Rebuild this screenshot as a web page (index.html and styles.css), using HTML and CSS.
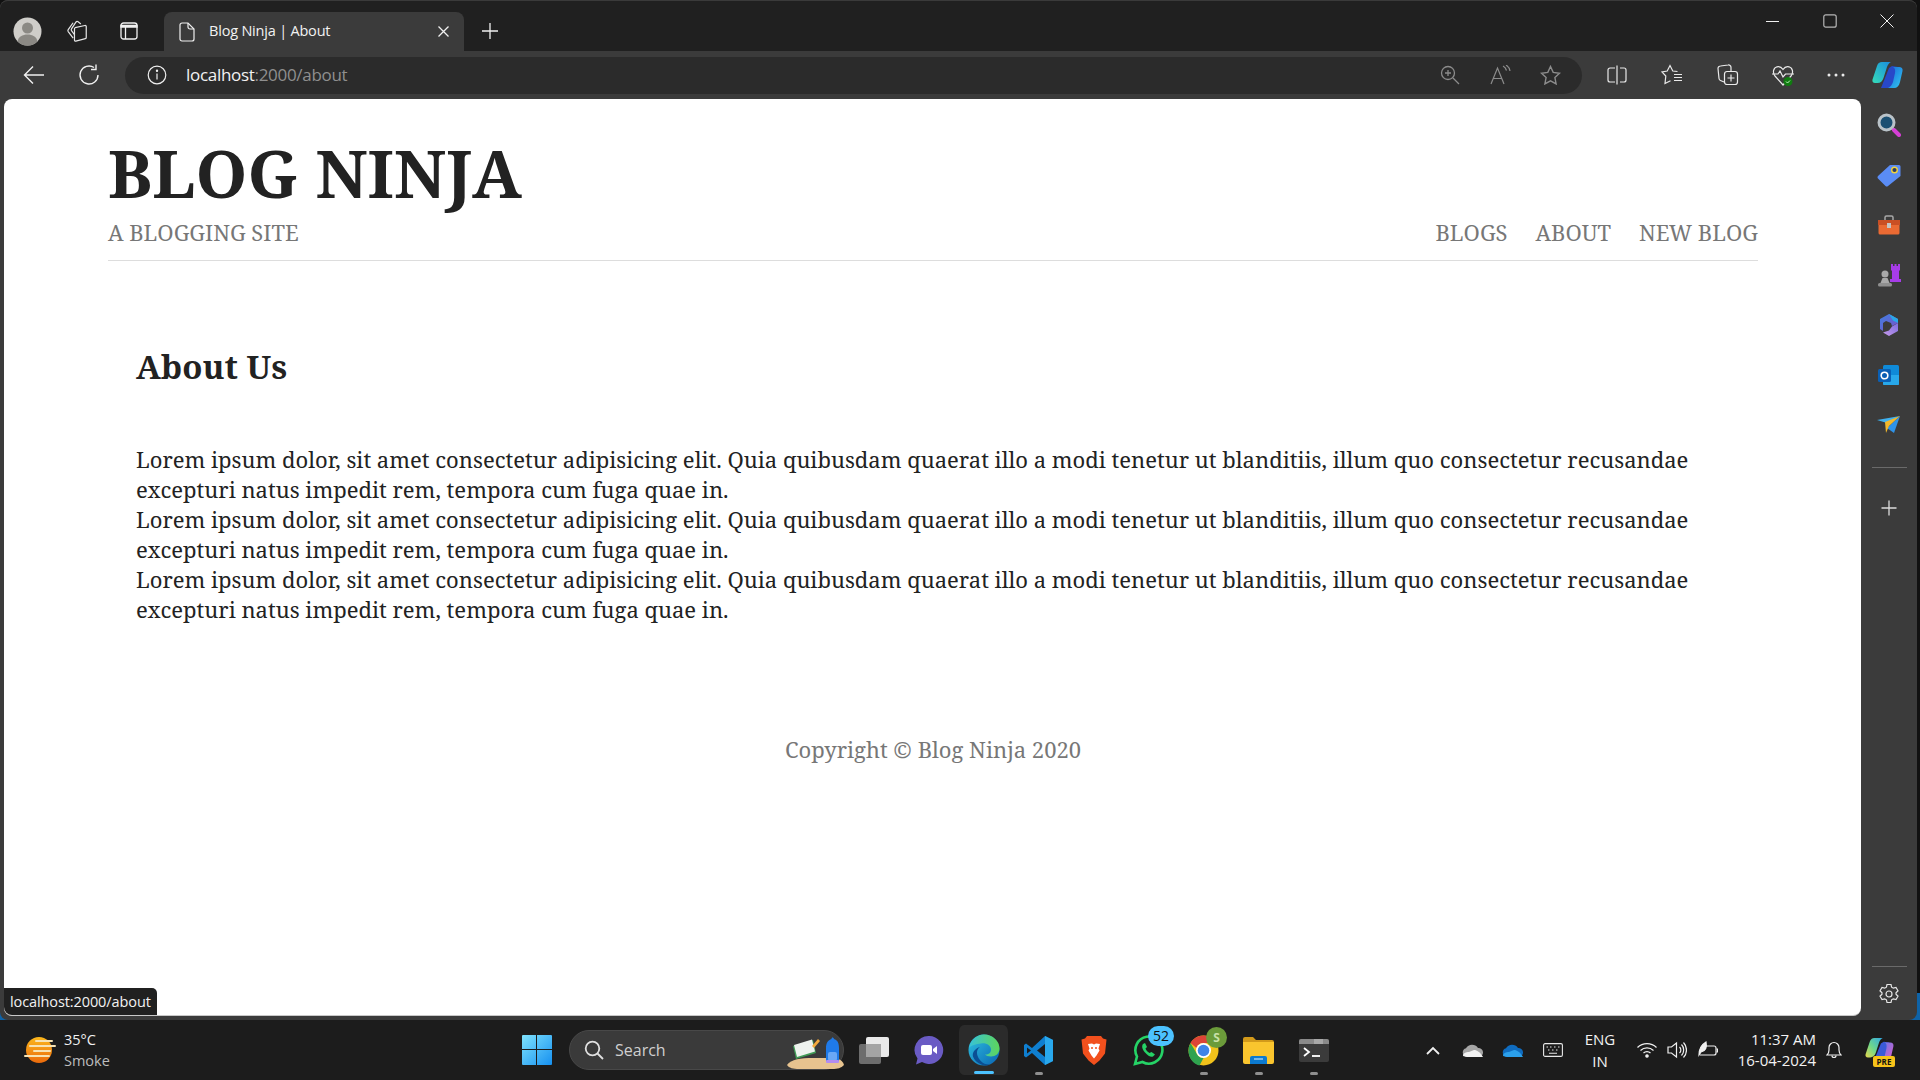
FILE: index.html
```html
<!DOCTYPE html>
<html lang="en">
<head>
  <meta charset="UTF-8">
  <title>Blog Ninja | About</title>
  <link rel="stylesheet" href="styles.css">
</head>
<body>
  <div class="desk-patch desk-patch-left"></div>
  <div class="desk-patch desk-patch-right"></div>
  <div class="window">
    <!-- Tab strip -->
    <div class="tabstrip">
      <div class="avatar">
        <svg width="29" height="29" viewBox="0 0 29 29"><circle cx="14.500" cy="14.500" r="14" fill="#cfcdc9"/><circle cx="14.500" cy="11" r="5.500" fill="#8b8984"/><path d="M4.500 24.500c1-5 5-7 10-7s9 2 10 7a14 14 0 0 1-20 0z" fill="#8b8984"/></svg>
      </div>
      <div class="strip-btn strip-collections">
        <svg width="22" height="22" viewBox="0 0 20 20" fill="none" stroke="#e6e6e6" stroke-width="1.100"><path d="M8.300 7l8.900-2a1 1 0 0 1 1.200 1v10a1 1 0 0 1-.8 1l-8.600 2.200a1 1 0 0 1-1.300-1V8a1 1 0 0 1 .6-1z"/><path d="M6.500 16.500L2 10.500a1.500 1.500 0 0 1 0-1.700L6.500 2.500"/><path d="M7.500 13l-2.500-3.300a1.500 1.500 0 0 1 0-1.600L9 2a1.500 1.500 0 0 1 2-.4l2.500 2"/></svg>
      </div>
      <div class="strip-btn strip-vertical">
        <svg width="18" height="18" viewBox="0 0 18 18" fill="none" stroke="#f0f0f0" stroke-width="1.300"><rect x="1" y="1" width="16" height="16" rx="2.500"/><path d="M5.500 5v12"/><path d="M1 3.500h16v1.500H1z" fill="#f0f0f0"/></svg>
      </div>
      <div class="tab">
        <svg class="tab-doc" width="16" height="20" viewBox="0 0 16 20" fill="none" stroke="#f0f0f0" stroke-width="1.200"><path d="M3 1h6l6 6v10a2 2 0 0 1-2 2H3a2 2 0 0 1-2-2V3a2 2 0 0 1 2-2z"/><path d="M9 1v4a2 2 0 0 0 2 2h4"/></svg>
        <span class="tab-title">Blog Ninja | About</span>
        <svg class="tab-close" width="11" height="11" viewBox="0 0 11 11" stroke="#f0f0f0" stroke-width="1.300"><path d="M.5.500l10 10M10.500.500l-10 10"/></svg>
      </div>
      <div class="strip-btn strip-new">
        <svg width="18" height="18" viewBox="0 0 18 18" stroke="#f0f0f0" stroke-width="1.300"><path d="M9 1v16M1 9h16"/></svg>
      </div>
      <div class="win-controls">
        <svg width="14" height="14" viewBox="0 0 14 14" stroke="#f0f0f0" stroke-width="1"><path d="M0 7.500h13"/></svg>
        <svg width="14" height="14" viewBox="0 0 14 14" fill="none" stroke="#b5b5b5" stroke-width="1.200"><rect x=".8" y=".8" width="12.400" height="12.400" rx="2"/></svg>
        <svg width="14" height="14" viewBox="0 0 14 14" stroke="#f0f0f0" stroke-width="1"><path d="M.5.500l13 13M13.500.500l-13 13"/></svg>
      </div>
    </div>

    <!-- Toolbar -->
    <div class="toolbar">
      <svg class="tool tool-back" width="22" height="20" viewBox="0 0 22 20" fill="none" stroke="#f0f0f0" stroke-width="1.400"><path d="M10 1.500L1.500 10l8.500 8.500M1.500 10H21"/></svg>
      <svg class="tool tool-reload" width="22" height="22" viewBox="0 0 22 22" fill="none" stroke="#f0f0f0" stroke-width="1.400"><path d="M16 3.500A9 9 0 1 0 20 11"/><path d="M18 .5v5h-5"/></svg>
      <div class="address">
        <svg class="addr-info" width="20" height="20" viewBox="0 0 20 20" fill="none" stroke="#eee" stroke-width="1.200"><circle cx="10" cy="10" r="8.800"/><path d="M10 8.500v6"/><circle cx="10" cy="5.800" r=".6" fill="#eee"/></svg>
        <span class="url"><span class="url-host">localhost</span>:2000/about</span>
        <div class="addr-icons">
          <svg width="20" height="20" viewBox="0 0 20 20" fill="none" stroke="#8c8c8c" stroke-width="1.300"><circle cx="8" cy="8" r="6.500"/><path d="M13 13l6 6M8 5v6M5 8h6"/></svg>
          <svg width="22" height="20" viewBox="0 0 22 20" fill="none" stroke="#8c8c8c" stroke-width="1.200"><path d="M1 19L7.500 3 14 19M3.500 13.500h8"/><path d="M13 1c2 1 3 2.500 3.500 4.500M16 0c2 1.200 3.500 3 4 6"/></svg>
          <svg class="addr-star" width="21" height="20" viewBox="0 0 21 20" fill="none" stroke="#8c8c8c" stroke-width="1.400"><path d="M10.500 1.500l2.700 5.900 6.300.8-4.600 4.400 1.200 6.300-5.600-3.100-5.600 3.100 1.200-6.300-4.600-4.400 6.300-.8z"/></svg>
        </div>
      </div>
      <div class="tool-icons">
        <svg class="ti-split" width="20" height="20" viewBox="0 0 20 20" fill="none" stroke="#eaeaea" stroke-width="1.200"><path d="M8 3H3a2 2 0 0 0-2 2v10a2 2 0 0 0 2 2h5M13 3h4a2 2 0 0 1 2 2v10a2 2 0 0 1-2 2h-4M10 .5v19"/></svg>
        <svg class="ti-fav" width="22" height="22" viewBox="0 0 22 22" fill="none" stroke="#eaeaea" stroke-width="1.200"><path d="M16.500 7.500L11.800 7 9 1.500 6.200 7 1 7.900 4.800 12 4 19.500l5.500-2.800"/><path d="M13 10.500h8M13 13.500h8M13 16.500h8"/></svg>
        <svg class="ti-coll" width="22" height="22" viewBox="0 0 22 22" fill="none" stroke="#eaeaea" stroke-width="1.200"><path d="M7 18l-3.500-1.500A2.500 2.500 0 0 1 2 14.500L1 4.500A2.500 2.500 0 0 1 3.500 2L11 1a2.500 2.500 0 0 1 3 2.500V7"/><rect x="7.500" y="7.500" width="13" height="13" rx="2.500"/><path d="M14 10.500v7M10.500 14h7"/></svg>
        <svg class="ti-health" width="24" height="24" viewBox="0 0 24 24" fill="none"><path d="M4 13C1.500 10 2 5 6 3.800c2.500-.6 4.500.4 6 2.700 1.500-2.300 3.500-3.300 6-2.700 4 1.200 4.500 6.200 2 9.200L12 22z" stroke="#eaeaea" stroke-width="1.200"/><path d="M1 11h6l2-3 3 6 2.500-3H23" stroke="#eaeaea" stroke-width="1.200"/><circle cx="17" cy="18.500" r="4.500" fill="#107c10"/><path d="M15 18.500l1.500 1.500 2.500-2.500" stroke="#bff0bf" stroke-width="1"/></svg>
        <svg class="ti-more" width="18" height="4" viewBox="0 0 18 4" fill="#eaeaea"><circle cx="2" cy="2" r="1.500"/><circle cx="9" cy="2" r="1.500"/><circle cx="16" cy="2" r="1.500"/></svg>
        <svg class="ti-copilot" width="31" height="28" viewBox="0 0 31 28"><defs><linearGradient id="cpa" x1="1" y1="0" x2="0" y2="1"><stop offset="0" stop-color="#1a8de0"/><stop offset="1" stop-color="#35dcb8"/></linearGradient><linearGradient id="cpb" x1="0" y1="0" x2="1" y2="1"><stop offset="0" stop-color="#1668d8"/><stop offset="1" stop-color="#34c8f2"/></linearGradient></defs><path d="M17 7l3-2 6 1-4 21H9z" fill="#2848c8"/><path d="M10 1h9c-2 1-3 2.500-4 5l-3.500 11c-1 3-3 5-6 5H3c-2 0-3-1.500-2.500-3.500L5 5c.8-2.500 2.500-4 5-4z" fill="url(#cpa)"/><path d="M21 6h6c2.500 0 4 1.500 3.500 4L28 21c-1 4-3 6-6 6h-6c2.500-1 4-3 5-6l2-9c.5-3 0-5-2-6z" fill="url(#cpb)"/></svg>
      </div>
    </div>

    <!-- Page and sidebar -->
    <div class="main">
      <div class="page">
        <header class="site-header">
          <h1 class="site-title">BLOG NINJA</h1>
          <div class="site-row">
            <span class="site-tag">A BLOGGING SITE</span>
            <nav class="site-nav">
              <a href="#">BLOGS</a>
              <a href="#">ABOUT</a>
              <a href="#">NEW BLOG</a>
            </nav>
          </div>
        </header>
        <section class="about">
          <h2>About Us</h2>
          <p>Lorem ipsum dolor, sit amet consectetur adipisicing elit. Quia quibusdam quaerat illo a modi tenetur ut blanditiis, illum quo consectetur recusandae excepturi natus impedit rem, tempora cum fuga quae in.</p>
          <p>Lorem ipsum dolor, sit amet consectetur adipisicing elit. Quia quibusdam quaerat illo a modi tenetur ut blanditiis, illum quo consectetur recusandae excepturi natus impedit rem, tempora cum fuga quae in.</p>
          <p>Lorem ipsum dolor, sit amet consectetur adipisicing elit. Quia quibusdam quaerat illo a modi tenetur ut blanditiis, illum quo consectetur recusandae excepturi natus impedit rem, tempora cum fuga quae in.</p>
        </section>
        <footer class="site-footer">Copyright © Blog Ninja 2020</footer>
        <div class="status">localhost:2000/about</div>
      </div>
      <aside class="sidebar">
        <div class="side-slot"><svg width="24" height="24" viewBox="0 0 24 24"><circle cx="9.500" cy="9.500" r="7.500" fill="#1b4f72" stroke="#b9c2c8" stroke-width="3"/><path d="M15 15l2 2" stroke="#b9c2c8" stroke-width="3"/><path d="M17 17l5 5" stroke="#d63fd6" stroke-width="4" stroke-linecap="round"/></svg></div>
        <div class="side-slot"><svg width="24" height="24" viewBox="0 0 24 24"><path d="M13 2h9a1.500 1.500 0 0 1 1.500 1.500V13L11 23a2 2 0 0 1-2.500 0L1 15.500a2 2 0 0 1 0-2.500z" fill="#5a8cf5"/><circle cx="17.500" cy="7" r="2.800" fill="#2c3a66" stroke="#f2d43c" stroke-width="1.400"/></svg></div>
        <div class="side-slot"><svg width="24" height="20" viewBox="0 0 24 20"><path d="M8 5V2.500A1.500 1.500 0 0 1 9.500 1h5A1.500 1.500 0 0 1 16 2.500V5" fill="none" stroke="#a8a8a8" stroke-width="1.500"/><path d="M1 5h22v5H1z" fill="#c94f24"/><path d="M1.500 10h21v8a1.500 1.500 0 0 1-1.500 1.500H3A1.500 1.500 0 0 1 1.500 18z" fill="#ea6a33"/><rect x="10" y="8" width="4" height="5" fill="#c4c4c4"/></svg></div>
        <div class="side-slot"><svg width="24" height="24" viewBox="0 0 24 24"><circle cx="8" cy="11" r="3.500" fill="#a9a9a9"/><path d="M5.500 15h5l2 5h-9z" fill="#a9a9a9"/><rect x="1" y="20" width="14" height="3.500" rx="1.500" fill="#8f8f8f"/><path d="M14 1h2v2h1.500V1h2v2H21V1h2v6l-1 1v8h2v3H13v-3h2V8l-1-1z" fill="#a63ce8"/></svg></div>
        <div class="side-slot"><svg width="22" height="24" viewBox="0 0 22 24"><defs><linearGradient id="m3a" x1="0" y1="0" x2="1" y2="1"><stop offset="0" stop-color="#3f7fe0"/><stop offset="1" stop-color="#7c50c8"/></linearGradient><linearGradient id="m3b" x1="0" y1="1" x2="1" y2="0"><stop offset="0" stop-color="#c79ae8"/><stop offset="1" stop-color="#7c6ce0"/></linearGradient></defs><path d="M11 1l9 5v4l-6 3-1-3-5-2-3 2v8l-3-2V6z" fill="url(#m3a)"/><path d="M20 10v8l-9 5-6-3.500 6-2 3-4z" fill="url(#m3b)"/><path d="M11 1l9 5v4l-5-2.500z" fill="#29a8e8"/></svg></div>
        <div class="side-slot"><svg width="22" height="22" viewBox="0 0 22 22"><rect x="5" y="1" width="16" height="20" rx="1.500" fill="#0f8ad8"/><path d="M5 11h16v9a1 1 0 0 1-1 1H6a1 1 0 0 1-1-1z" fill="#28a8ea"/><rect x="0" y="5" width="13" height="13" rx="1.500" fill="#0a5fb4"/><circle cx="6.500" cy="11.500" r="3.300" fill="none" stroke="#fff" stroke-width="1.600"/></svg></div>
        <div class="side-slot"><svg width="24" height="18" viewBox="0 0 24 18"><path d="M0 4l23-4-13 7z" fill="#3fb1f0"/><path d="M23 0L17 17l-7-5z" fill="#2f93e8"/><path d="M23 0L8 6l1 11 3-7z" fill="#f2b82c"/></svg></div>
        <div class="side-rule side-rule-top"></div>
        <div class="side-slot"><svg width="16" height="16" viewBox="0 0 16 16" stroke="#dcdcdc" stroke-width="1.300"><path d="M8 .5v15M.5 8h15"/></svg></div>
        <div class="side-spacer"></div>
        <div class="side-rule side-rule-bottom"></div>
        <div class="side-gear"><svg width="22" height="22" viewBox="0 0 22 22" fill="none" stroke="#e6e6e6" stroke-width="1.200"><circle cx="11" cy="11" r="3"/><path d="M9 1.500h4l.6 2.700 1.700 1 2.700-.8 2 3.400-2 1.900v1.600l2 1.900-2 3.400-2.700-.8-1.700 1-.6 2.700H9l-.6-2.700-1.700-1-2.700.8-2-3.400 2-1.900V9.700l-2-1.900 2-3.400 2.700.8 1.700-1z"/></svg></div>
      </aside>
    </div>
  </div>

  <!-- Taskbar -->
  <div class="taskbar">
    <div class="weather">
      <svg width="32" height="28" viewBox="0 0 32 28"><defs><linearGradient id="sun" x1="0" y1="0" x2="0" y2="1"><stop offset="0" stop-color="#fcb81c"/><stop offset="1" stop-color="#ea6a0c"/></linearGradient></defs><circle cx="15" cy="14" r="13" fill="url(#sun)"/><path d="M12 5h16M6 10h25M10 15h16M1 20h24" stroke="#f7e3b4" stroke-width="2" stroke-linecap="round"/></svg>
      <div class="weather-text"><span class="temp">35°C</span><span class="cond">Smoke</span></div>
    </div>
    <div class="task-center">
      <svg class="start" width="30" height="30" viewBox="0 0 30 30"><defs><linearGradient id="win" x1="0" y1="0" x2="1" y2="1"><stop offset="0" stop-color="#7fe3fd"/><stop offset="1" stop-color="#1690f0"/></linearGradient></defs><path d="M1 0h13v14H0V1a1 1 0 0 1 1-1zM15 0h14a1 1 0 0 1 1 1v13H15zM0 15h14v15H1a1 1 0 0 1-1-1zM15 15h15v14a1 1 0 0 1-1 1H15z" fill="url(#win)"/></svg>
      <div class="search">
        <svg width="20" height="20" viewBox="0 0 20 20" fill="none" stroke="#e0e0e0" stroke-width="1.800"><circle cx="8.500" cy="8.500" r="6.800"/><path d="M13.500 13.500l5.500 5.500"/></svg>
        <span class="search-text">Search</span>
        <svg class="search-art" width="60" height="34" viewBox="0 0 60 34"><path d="M2 29c4-6 14-7 26-7h20c6 0 10 3 11 7-3 3-6 4-12 4H14C8 33 4 32 2 29z" fill="#e7c38f"/><path d="M8 10l20-6 3 13-20 6z" fill="#3f9a55"/><path d="M9 9l18-5.500 3 12-18 5.500z" fill="#eef2ee"/><path d="M27 10l6-7 2 2-6 7z" fill="#f2a93c"/><path d="M41 12c0-5 2-8 5.500-9 0-2 2-2 2.500 0 3.500 1 5 4 5 9v14H41z" fill="#1f7ae8"/><rect x="43" y="16" width="9" height="9" rx="2" fill="#6aa8f5"/><rect x="41" y="24" width="13" height="3" rx="1" fill="#b28cf0"/></svg>
      </div>
      <div class="task-slot"><svg width="32" height="28" viewBox="0 0 32 28"><rect x="1" y="8" width="22" height="20" rx="2" fill="#6d6d6d"/><rect x="8" y="1" width="23" height="20" rx="2" fill="#e9e9e9"/><rect x="8" y="8" width="15" height="13" fill="#a4a4a4"/></svg></div>
      <div class="task-slot"><svg width="30" height="30" viewBox="0 0 30 30"><path d="M15 1a14 14 0 1 1-7 26l-6 2.500 1.500-6A14 14 0 0 1 15 1z" fill="#6a5bc4"/><rect x="7" y="10" width="11" height="10" rx="2" fill="#fff"/><path d="M19 14l4-3v8l-4-3z" fill="#fff"/></svg></div>
      <div class="task-slot task-active">
        <svg width="32" height="32" viewBox="0 0 32 32"><defs><linearGradient id="edge" x1="0" y1="0" x2="1" y2="1"><stop offset="0" stop-color="#2fc5e0"/><stop offset="1" stop-color="#0a63b4"/></linearGradient><linearGradient id="edg2" x1="0" y1="0" x2="1" y2="0"><stop offset="0" stop-color="#38c2d8"/><stop offset="1" stop-color="#5ed65a"/></linearGradient></defs><circle cx="16" cy="16" r="15.500" fill="url(#edge)"/><path d="M1 14C3 5 10 .5 16 .5c9 0 15.500 7 15.500 14 0 5-4 8-8.500 8-3 0-5-1-6-2 4 0 6-2 6-5 0-4-5-7-10-6-5 .5-10 2-12 4.500z" fill="url(#edg2)"/><path d="M12 13c-3 2-4 6-2 10 2 4 6 8 12 7.500-6 3-15-2-17-8-1-4 2-8 7-9.500z" fill="#0b4f94"/></svg>
        <span class="run run-active"></span>
      </div>
      <div class="task-slot">
        <svg width="31" height="31" viewBox="0 0 31 31"><path d="M22 1l8 4v21l-8 4L9 18l-6 4.500-2-1.500v-11l2-1.500L9 13z" fill="#0f7fd0"/><path d="M22 1l8 4v21l-8 4z" fill="#29a8ec"/><path d="M22 9l-8 6.500 8 6.500z" fill="#1c1c1c"/><path d="M4 12.500l4 3-4 3z" fill="#1c1c1c"/></svg>
        <span class="run"></span>
      </div>
      <div class="task-slot"><svg width="26" height="30" viewBox="0 0 26 30"><path d="M6 1h14l2 2.500 3.500 1-1.500 14-5.500 7L13 30l-5.500-4.500L2 18.500.5 4.500 4 3.500z" fill="#f2501d"/><path d="M7 9l4-.5 2 1 2-1 4 .5-1.500 4.500 1 2-3 5-2.500 3-2.500-3-3-5 1-2z" fill="#fff"/><path d="M10 13h2M14 13h2" stroke="#f2501d" stroke-width="1.500"/></svg></div>
      <div class="task-slot">
        <svg width="31" height="31" viewBox="0 0 31 31" fill="none"><path d="M2 29l2-7.500A13.500 13.500 0 1 1 9.500 27z" stroke="#25d366" stroke-width="2.600"/><path d="M10 9c-1.500 2-1 5 2 8.500s6 5 8 4l2-2-3.500-2.500-2 1c-2-1-3.500-3-4-4.500l1.500-1.500-2-4z" fill="#25d366"/></svg>
        <span class="badge badge-num">52</span>
      </div>
      <div class="task-slot">
        <svg width="31" height="31" viewBox="0 0 31 31"><circle cx="15.500" cy="15.500" r="15" fill="#f1c21b"/><path d="M15.500.5A15 15 0 0 1 28.500 8H15.500a7.500 7.500 0 0 0-7 5L2.500 8A15 15 0 0 1 15.500.5z" fill="#dc4437"/><path d="M.5 15.500A15 15 0 0 1 2.500 8l6.500 11a7.500 7.500 0 0 0 6.500 4l-4 7.500A15 15 0 0 1 .5 15.500z" fill="#2fa34f"/><circle cx="15.500" cy="15.500" r="7.500" fill="#fff"/><circle cx="15.500" cy="15.500" r="5.800" fill="#3f84e8"/></svg>
        <span class="badge badge-s">S</span>
        <span class="run"></span>
      </div>
      <div class="task-slot">
        <svg width="31" height="27" viewBox="0 0 31 27"><path d="M0 2a2 2 0 0 1 2-2h8l3 3h16a2 2 0 0 1 2 2v4H0z" fill="#d39a1a"/><path d="M0 5h31v20a2 2 0 0 1-2 2H2a2 2 0 0 1-2-2z" fill="#fac52e"/><path d="M7 27v-6a2 2 0 0 1 2-2h13a2 2 0 0 1 2 2v6z" fill="#0c7ad0"/><path d="M11 22h9" stroke="#e8f4ff" stroke-width="1"/></svg>
        <span class="run"></span>
      </div>
      <div class="task-slot">
        <svg width="30" height="23" viewBox="0 0 30 23"><rect width="30" height="23" rx="2" fill="#3b3b3b"/><path d="M0 2a2 2 0 0 1 2-2h26a2 2 0 0 1 2 2v3H0z" fill="#8a8a8a"/><path d="M15 0h9v5h-9z" fill="#a8a8a8"/><path d="M5 9l5 4-5 4" stroke="#fff" stroke-width="1.800" fill="none"/><path d="M13 17h8" stroke="#eee" stroke-width="2"/></svg>
        <span class="run"></span>
      </div>
    </div>
    <div class="tray">
      <svg class="tray-chevron" width="14" height="9" viewBox="0 0 14 9" fill="none" stroke="#f0f0f0" stroke-width="1.800"><path d="M1 8l6-6 6 6"/></svg>
      <svg class="tray-cloud tray-cloud-grey" width="22" height="14" viewBox="0 0 22 14"><path d="M5 14a4.500 4.500 0 0 1-1-8.800A7 7 0 0 1 16 5a4.500 4.500 0 0 1 1 9z" fill="#a6a6a6"/><path d="M1 13c0-3 3-4 6-4l5-2c3 0 6 2 9 7H5z" fill="#f2f2f2"/></svg>
      <svg class="tray-cloud" width="22" height="14" viewBox="0 0 22 14"><path d="M5 14a4.500 4.500 0 0 1-1-8.800A7 7 0 0 1 16 5a4.500 4.500 0 0 1 1 9z" fill="#0f6cc0"/><path d="M1 13c0-3 3-4 6-4l5-2c3 0 6 2 9 7H5z" fill="#2ba0ec"/></svg>
      <svg class="tray-kbd" width="20" height="14" viewBox="0 0 20 14" fill="none" stroke="#e8e8e8" stroke-width="1.100"><rect x=".6" y=".6" width="18.800" height="12.800" rx="1.500"/><path d="M3.500 4h1.500M7 4h1.500M11 4h1.500M15 4h1.500M5 7h1.500M9 7h1.500M13 7h1.500M6 10.300h8"/></svg>
      <div class="lang"><span>ENG</span><span>IN</span></div>
      <svg class="tray-wifi" width="20" height="16" viewBox="0 0 20 16" fill="none" stroke="#f0f0f0" stroke-width="1.200"><path d="M.5 5.500a13.500 13.500 0 0 1 19 0M3.500 8.500a9.500 9.500 0 0 1 13 0M6.500 11a5 5 0 0 1 7 0"/><circle cx="10" cy="14" r="1.200" fill="#f0f0f0"/></svg>
      <svg class="tray-vol" width="20" height="18" viewBox="0 0 20 18" fill="none" stroke="#f0f0f0" stroke-width="1.200"><path d="M1 6h3.500L9.500 2v14l-5-4H1z"/><path d="M12.500 6a4 4 0 0 1 0 6M14.500 3.500a8 8 0 0 1 0 11M16.500 1.500a11 11 0 0 1 0 15"/></svg>
      <svg class="tray-bat" width="20" height="18" viewBox="0 0 20 18" fill="none" stroke="#f0f0f0" stroke-width="1.200"><path d="M8 5h8a2 2 0 0 1 2 2v5a2 2 0 0 1-2 2H2"/><path d="M18.500 8h1v3h-1"/><path d="M1 14c0-6 2-10 7-13 1 5 0 9-5 10z" fill="#f0f0f0"/></svg>
      <div class="clock"><span>11:37 AM</span><span>16-04-2024</span></div>
      <svg class="tray-bell" width="16" height="18" viewBox="0 0 16 18" fill="none" stroke="#f0f0f0" stroke-width="1.200"><path d="M1 14c1.500-1.500 2-2.500 2-5V6.500a5 5 0 0 1 10 0V9c0 2.500.5 3.500 2 5z"/><path d="M6 14.500a2 2 0 0 0 4 0"/></svg>
      <div class="tray-copilot">
        <svg width="29" height="26" viewBox="0 0 31 28"><defs><linearGradient id="pre" x1="1" y1="0" x2="0" y2="1"><stop offset="0" stop-color="#2fa8e8"/><stop offset=".55" stop-color="#6fd88a"/><stop offset="1" stop-color="#e8d84a"/></linearGradient><linearGradient id="pr2" x1="0" y1="0" x2="1" y2="1"><stop offset="0" stop-color="#5a7ce8"/><stop offset="1" stop-color="#e85ac8"/></linearGradient></defs><path d="M17 7l3-2 6 1-4 21H9z" fill="#3a5ad8"/><path d="M10 1h9c-2 1-3 2.500-4 5l-3.500 11c-1 3-3 5-6 5H3c-2 0-3-1.500-2.500-3.500L5 5c.8-2.500 2.500-4 5-4z" fill="url(#pre)"/><path d="M21 6h6c2.500 0 4 1.500 3.500 4L28 21c-1 4-3 6-6 6h-6c2.500-1 4-3 5-6l2-9c.5-3 0-5-2-6z" fill="url(#pr2)"/></svg>
        <span class="pre">PRE</span>
      </div>
    </div>
  </div>
</body>
</html>
```

FILE: styles.css
```css
/* General */
html, body {
  margin: 0;
  height: 100%;
}

body {
  position: relative;
  width: 1920px;
  height: 1080px;
  overflow: hidden;
  display: flex;
  flex-direction: column;
  background: #111;
  font-family: 'Open Sans', 'Noto Sans', sans-serif;
}

svg {
  display: block;
  flex: none;
}

/* Wallpaper showing past the window corners */
.desk-patch {
  position: absolute;
  top: 993px;
  width: 14px;
  height: 27px;
  background: #0e63a8;
}

.desk-patch-left {
  left: 0;
}

.desk-patch-right {
  right: 0;
}

.window {
  position: relative;
  height: 1020px;
  width: 1917px;
  display: flex;
  flex-direction: column;
  background: #3b3b3b;
  border-radius: 8px 8px 8px 8px;
}

/* Tab strip */
.tabstrip {
  height: 51px;
  box-sizing: border-box;
  border-top: 1px solid #3a3a3a;
  border-radius: 8px 8px 0 0;
  background: #202020;
  display: flex;
  align-items: flex-end;
  padding-left: 13px;
}

.avatar {
  height: 40px;
  margin-right: 24px;
  display: flex;
  align-items: center;
}

.strip-btn {
  height: 40px;
  display: flex;
  align-items: center;
}

.strip-collections {
  width: 54px;
}

.strip-vertical {
  width: 44px;
}

.tab {
  width: 300px;
  height: 39px;
  box-sizing: border-box;
  background: #3b3b3b;
  border-radius: 8px 8px 0 0;
  display: flex;
  align-items: center;
  padding: 0 15px 0 15px;
}

.tab-title {
  margin: 0 0 2px 14px;
  flex: 1;
  color: #f2f2f2;
  font-size: 14.500px;
  letter-spacing: -0.2px;
}

.strip-new {
  margin-left: 17px;
}

.win-controls {
  margin-left: auto;
  height: 50px;
  align-self: flex-start;
  display: flex;
  align-items: flex-start;
  gap: 43px;
  padding: 13px 23px 0 0;
}

/* Toolbar */
.toolbar {
  height: 48px;
  display: flex;
  align-items: center;
  padding-left: 23px;
}

.tool-reload {
  margin-left: 33px;
}

.address {
  width: 1457px;
  height: 37px;
  margin-left: 25px;
  background: #2b2b2b;
  border-radius: 19px;
  display: flex;
  align-items: center;
  padding-left: 22px;
  box-sizing: border-box;
}

.url {
  margin: -1px 0 0 19px;
  color: #8f8f8f;
  font-size: 17px;
  letter-spacing: -0.3px;
}

.url-host {
  color: #f2f2f2;
}

.addr-icons {
  margin-left: auto;
  display: flex;
  align-items: center;
  gap: 30px;
  padding-right: 21px;
}

.addr-star {
  margin-left: -2px;
}

.tool-icons {
  display: flex;
  align-items: center;
  margin-left: 25px;
  gap: 34px;
}

.ti-health {
  margin-left: -2px;
}

.ti-more {
  margin-left: -2px;
}

.ti-copilot {
  margin-left: -7px;
}

/* Page and sidebar */
.main {
  flex: 1;
  display: flex;
  min-height: 0;
  padding-bottom: 4px;
}

.page {
  position: relative;
  width: 1857px;
  margin-left: 4px;
  box-sizing: border-box;
  padding: 0 103px 0 104px;
  background: #fff;
  border-radius: 8px;
  border-bottom: 1px solid #c8c8c8;
  font-family: 'Noto Serif', 'DejaVu Serif', serif;
  color: #222;
}

.site-header {
  height: 162px;
  box-sizing: border-box;
  border-bottom: 1px solid #ddd;
  padding-top: 37px;
}

.site-title {
  margin: 0;
  font-size: 66px;
  line-height: 72px;
  font-weight: 700;
  color: #222;
}

.site-row {
  display: flex;
  justify-content: space-between;
  align-items: center;
  margin-top: 9px;
  color: #777;
  font-size: 22px;
  line-height: 30px;
}

.site-nav {
  display: flex;
  gap: 28px;
}

.site-nav a {
  color: #777;
  text-decoration: none;
}

.about {
  padding: 0 28px;
}

.about h2 {
  margin: 0;
  padding-top: 82px;
  font-size: 33px;
  line-height: 48px;
  font-weight: 700;
  color: #222;
}

.about p {
  margin: 0;
  font-size: 22px;
  line-height: 30px;
  color: #222;
}

.about h2 + p {
  margin-top: 53px;
}

.site-footer {
  margin-top: 110px;
  text-align: center;
  color: #777;
  font-size: 22px;
  line-height: 30px;
}

.status {
  position: absolute;
  left: 0;
  bottom: 0;
  height: 27px;
  padding: 0 6px;
  line-height: 27px;
  background: #202020;
  border-radius: 0 5px 0 8px;
  color: #f2f2f2;
  font-family: 'Open Sans', 'Noto Sans', sans-serif;
  font-size: 14.500px;
  letter-spacing: -0.1px;
}

.sidebar {
  flex: 1;
  display: flex;
  flex-direction: column;
  align-items: center;
  padding-top: 1px;
}

.side-slot {
  height: 50px;
  display: flex;
  align-items: center;
  justify-content: center;
  flex: none;
}

.side-rule {
  width: 35px;
  height: 1px;
  background: #6a6a6a;
  flex: none;
}

.side-rule-top {
  margin: 17px 0 15px;
}

.side-rule-bottom {
  margin-bottom: 5px;
}

.side-spacer {
  flex: 1;
}

.side-gear {
  height: 44px;
  display: flex;
  align-items: center;
}

/* Taskbar */
.taskbar {
  position: relative;
  height: 60px;
  background: #1c1c1c;
  display: flex;
  align-items: center;
  color: #f2f2f2;
  font-size: 14.500px;
}

.weather {
  width: 519px;
  display: flex;
  align-items: center;
  padding-left: 24px;
  box-sizing: border-box;
  gap: 8px;
}

.weather-text {
  display: flex;
  flex-direction: column;
  line-height: 21px;
}

.cond {
  color: #bdbdbd;
}

.task-center {
  display: flex;
  align-items: center;
  width: 893px;
}

.start {
  margin-left: 3px;
}

.search {
  width: 275px;
  height: 40px;
  margin: 0 2px 0 17px;
  box-sizing: border-box;
  background: #3a3a3a;
  border: 1px solid #484848;
  border-radius: 20px;
  display: flex;
  align-items: center;
  padding-left: 14px;
  position: relative;
}

.search-text {
  margin-left: 11px;
  color: #cfcfcf;
  font-size: 16px;
}

.search-art {
  position: absolute;
  right: -2px;
  bottom: -1px;
}

.task-slot {
  position: relative;
  width: 55px;
  height: 52px;
  display: flex;
  align-items: center;
  justify-content: center;
}

.task-active {
  box-sizing: border-box;
  border: solid transparent;
  border-width: 1px 3px;
  background: #2b2b2b;
  background-clip: padding-box;
  border-radius: 8px;
}

.run {
  position: absolute;
  bottom: 1px;
  left: 50%;
  width: 8px;
  height: 3px;
  margin-left: -4px;
  background: #8f8f8f;
  border-radius: 2px;
}

.run-active {
  width: 20px;
  margin-left: -10px;
  background: #4cc2ff;
}

.badge {
  position: absolute;
  text-align: center;
  border-radius: 50%;
}

.badge-num {
  top: 2px;
  right: 2px;
  width: 26px;
  height: 20px;
  line-height: 20px;
  border-radius: 10px;
  background: #4cc2ff;
  color: #111;
  font-size: 14px;
}

.badge-s {
  top: 3px;
  right: 4px;
  width: 21px;
  height: 21px;
  line-height: 21px;
  background: #6b9b3a;
  color: #c9e0a8;
  font-size: 12px;
  font-weight: 700;
}

.tray {
  flex: 1;
  display: flex;
  align-items: center;
  font-size: 15px;
}

.tray-chevron {
  margin-left: 14px;
}

.tray-cloud {
  margin-left: 18px;
}

.tray-cloud-grey {
  margin-left: 22px;
}

.tray-kbd {
  margin-left: 19px;
}

.lang {
  width: 60px;
  margin-left: 7px;
  display: flex;
  flex-direction: column;
  align-items: center;
  line-height: 22px;
}

.tray-wifi {
  margin-left: 7px;
}

.tray-vol {
  margin-left: 10px;
}

.tray-bat {
  margin-left: 11px;
}

.clock {
  width: 92px;
  margin-left: 6px;
  display: flex;
  flex-direction: column;
  align-items: flex-end;
  line-height: 21px;
  white-space: nowrap;
}

.tray-bell {
  margin-left: 10px;
}

.tray-copilot {
  position: relative;
  margin-left: 23px;
}

.pre {
  position: absolute;
  right: -1px;
  bottom: -4px;
  width: 22px;
  height: 11px;
  line-height: 11px;
  text-align: center;
  border-radius: 2px;
  background: #f7c31a;
  color: #111;
  font-size: 8px;
  font-weight: 700;
}
```
